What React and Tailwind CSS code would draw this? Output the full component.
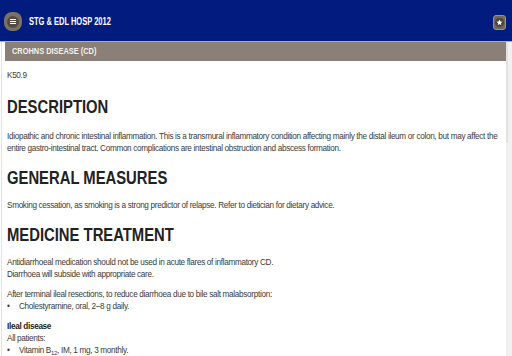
import React from "react";

const sans = { fontFamily: '"Liberation Sans", Arial, sans-serif' };

const Heading = ({ children, className = "" }) => (
  <h2 className={`text-[19px] leading-[22px] font-bold text-[#222] ${className}`}>
    <span className="inline-block origin-left scale-x-[0.78] whitespace-nowrap">{children}</span>
  </h2>
);

const P = ({ children, className = "" }) => (
  <p className={`text-[8.2px] leading-[12px] tracking-[-0.32px] text-[#3a3a3a] ${className}`}>{children}</p>
);

export default function App() {
  return (
    <div className="w-[512px] h-[356px] overflow-hidden bg-white flex flex-col" style={sans}>
      {/* Header */}
      <div className="h-[42px] bg-[#021b7f] flex items-center pl-[4px] pr-[6px] border-b border-[#a9a9c4] shrink-0">
        <button className="w-[18px] h-[19px] rounded-[8px] bg-[#7a7164] flex items-center justify-center mt-[2px] shrink-0">
          <span className="w-[12px] h-[12px] rounded-full bg-[#544c43] flex flex-col items-center justify-center gap-[1px]">
            <span className="block w-[6px] h-[1px] bg-white" />
            <span className="block w-[6px] h-[1px] bg-white" />
            <span className="block w-[6px] h-[1px] bg-white" />
          </span>
        </button>
        <span className="ml-[7px] text-white font-bold text-[10px] mt-[2px] inline-block origin-left scale-x-[0.75] whitespace-nowrap">
          STG &amp; EDL HOSP 2012
        </span>
        <div className="flex-1" />
        <button className="w-[13px] h-[15px] rounded-[3px] bg-[#6f675c] border border-[#9a9288] flex items-center justify-center mt-[4px] shrink-0">
          <span className="w-[9px] h-[9px] rounded-full bg-[#4c453d] flex items-center justify-center">
            <svg viewBox="0 0 24 24" className="w-[7px] h-[7px]" fill="white">
              <path d="M12 2l2.9 6.9 7.1.6-5.4 4.7 1.6 7.1L12 17.5 5.8 21.3l1.6-7.1L2 9.5l7.1-.6z" />
            </svg>
          </span>
        </button>
      </div>

      {/* Body */}
      <div className="flex-1 flex min-h-0">
        <div className="w-[5px] shrink-0 flex">
          <div className="ml-[1px] w-[1px] bg-[#e2e2e2]" />
        </div>
        <div className="flex-1 flex flex-col min-w-0">
          <div className="h-[19px] bg-[#8a8077] flex items-center pl-[7px] shrink-0">
            <span className="text-[#f4f2ef] font-bold text-[9.5px] inline-block origin-left scale-x-[0.78] whitespace-nowrap">
              CROHNS DISEASE (CD)
            </span>
          </div>
          <div className="pl-[2px] pr-[2px] pt-[9px]">
            <P>K50.9</P>
            <Heading className="mt-[14px]">DESCRIPTION</Heading>
            <P className="mt-[13px]">
              Idiopathic and chronic intestinal inflammation. This is a transmural inflammatory condition affecting mainly the distal ileum or colon, but may affect the entire gastro-intestinal tract. Common complications are intestinal obstruction and abscess formation.
            </P>
            <Heading className="mt-[12px]">GENERAL MEASURES</Heading>
            <P className="mt-[11px]">Smoking cessation, as smoking is a strong predictor of relapse. Refer to dietician for dietary advice.</P>
            <Heading className="mt-[12px]">MEDICINE TREATMENT</Heading>
            <P className="mt-[11px]">
              Antidiarrhoeal medication should not be used in acute flares of inflammatory CD.
              <br />
              Diarrhoea will subside with appropriate care.
            </P>
            <P className="mt-[8px]">After terminal ileal resections, to reduce diarrhoea due to bile salt malabsorption:</P>
            <P>
              <span className="inline-block w-[12px]">•</span>Cholestyramine, oral, 2–8 g daily.
            </P>
            <P className="mt-[8px] font-bold text-[#222]">Ileal disease</P>
            <P>All patients:</P>
            <P>
              <span className="inline-block w-[12px]">•</span>Vitamin B<sub className="text-[6px]">12</sub>, IM, 1 mg, 3 monthly.
            </P>
          </div>
        </div>
        {/* Scrollbar */}
        <div className="w-[6px] shrink-0 bg-[#f1f1f1] flex">
          <div className="w-[2px] h-[101px] bg-[#e2e2e2]" />
        </div>
      </div>
    </div>
  );
}
